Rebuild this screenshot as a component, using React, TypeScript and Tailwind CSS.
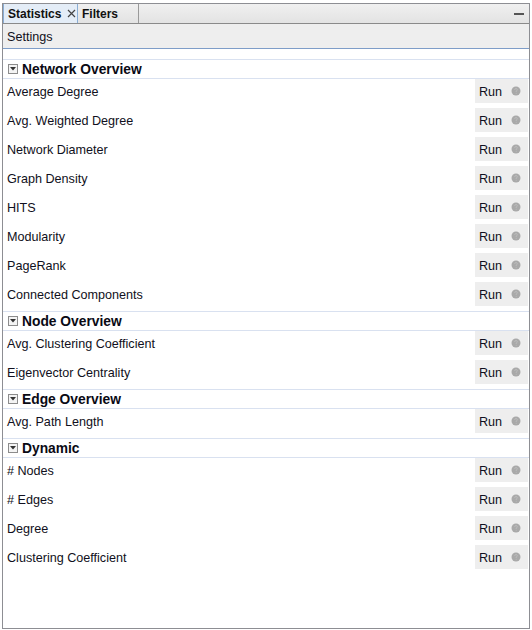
import React from 'react';

const sections: { title: string; items: string[] }[] = [
  {
    title: 'Network Overview',
    items: [
      'Average Degree',
      'Avg. Weighted Degree',
      'Network Diameter',
      'Graph Density',
      'HITS',
      'Modularity',
      'PageRank',
      'Connected Components',
    ],
  },
  { title: 'Node Overview', items: ['Avg. Clustering Coefficient', 'Eigenvector Centrality'] },
  { title: 'Edge Overview', items: ['Avg. Path Length'] },
  { title: 'Dynamic', items: ['# Nodes', '# Edges', 'Degree', 'Clustering Coefficient'] },
];

function HelpDot() {
  return (
    <svg width="10" height="10" viewBox="0 0 10 10">
      <circle cx="5" cy="5" r="4.5" fill="#a9a9a9" />
      <path d="M3.6 3.8 Q3.6 2.6 5 2.6 Q6.4 2.6 6.4 3.7 Q6.4 4.5 5.2 5 L5.2 5.9" fill="none" stroke="#bdbdbd" strokeWidth="0.9" />
      <circle cx="5.2" cy="7.2" r="0.55" fill="#bdbdbd" />
    </svg>
  );
}

function Toggle() {
  return (
    <div className="w-[10px] h-[10px] border border-[#8c8c8c] bg-[#f4f4f4] flex items-center justify-center">
      <svg width="6" height="4" viewBox="0 0 6 4">
        <path d="M0 0 H6 L3 3.5 Z" fill="#333" />
      </svg>
    </div>
  );
}

function Row({ label }: { label: string }) {
  return (
    <div className="h-[29px] flex items-start">
      <div className="flex-1 h-[24px] flex items-center pt-[2px] pl-[4px] text-[12.6px] text-[#101020]">{label}</div>
      <div className="w-[53px] h-[24px] mr-[1px] bg-[#eeeeee] flex items-center pl-[4px] gap-[9px] text-[12.6px] text-[#101020]">
        <span className="pt-[2px]">Run</span>
        <HelpDot />
      </div>
    </div>
  );
}

export default function App() {
  return (
    <div className="w-[532px] h-[630px] bg-white pt-[3px] pl-[2px]" style={{ fontFamily: '"Liberation Sans", Arial, sans-serif' }}>
      <div className="w-[528px] h-[626px] border border-[#8d8e93] flex flex-col">
        {/* tab bar */}
        <div className="h-[20px] flex items-stretch border-b border-[#8a8a8a] bg-gradient-to-b from-[#f0f0f0] to-[#e3e3e3]">
          <div className="w-[75px] flex items-center pl-[4px] gap-[6px] bg-[#e4edf7] border-l border-r border-[#8aaed6] text-[12px] font-bold text-[#111]">
            <span className="pt-[1px]">Statistics</span>
            <svg width="9" height="9" viewBox="0 0 9 9">
              <path d="M1 1 L8 8 M8 1 L1 8" stroke="#444" strokeWidth="1.2" />
            </svg>
          </div>
          <div className="w-[61px] flex items-center pt-[1px] pl-[4px] border-r border-[#9a9a9a] text-[12px] font-bold text-[#111]">Filters</div>
          <div className="flex-1 flex items-center justify-end pr-[5px]">
            <div className="w-[10px] h-[2px] bg-[#555]" />
          </div>
        </div>
        {/* settings */}
        <div className="h-[25px] bg-[#eeeeee] border-b border-[#7e9dc8] flex items-center pt-[2px] pl-[4px] text-[12.6px] text-[#101020]">
          Settings
        </div>
        <div className="pt-[10px] flex-1">
          {sections.map((s) => (
            <div key={s.title}>
              <div className="h-[20px] border-t border-b border-[#d9e1f0] flex items-center pl-[5px] gap-[4px]">
                <Toggle />
                <span className="pt-[2px] text-[13.8px] font-bold text-[#0a0a14]">{s.title}</span>
              </div>
              {s.items.map((it) => (
                <Row key={it} label={it} />
              ))}
            </div>
          ))}
        </div>
      </div>
    </div>
  );
}
